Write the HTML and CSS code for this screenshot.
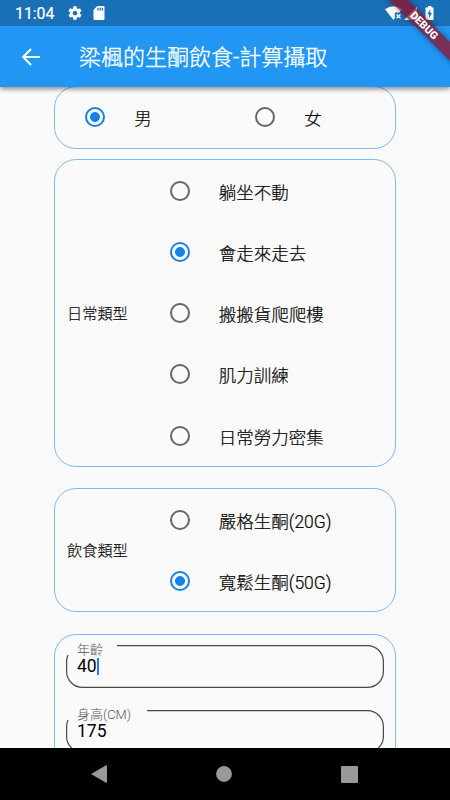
FILE: index.html
```html
<!DOCTYPE html>
<html lang="zh-Hant">
<head>
<meta charset="utf-8">
<title>梁楓的生酮飲食-計算攝取</title>
<link rel="stylesheet" href="styles.css">
</head>
<body>
<div class="screen">
  <header class="top">
    <div class="status">
      <span class="clock">11:04</span>
      <svg class="gear" width="16" height="16" viewBox="0 0 24 24"><path fill="#fff" d="M19.43 12.98c.04-.32.07-.64.07-.98s-.03-.66-.07-.98l2.110-1.650c.19-.15.24-.42.12-.64l-2-3.460c-.12-.22-.39-.3-.61-.22l-2.490 1c-.52-.4-1.080-.73-1.690-.98l-.38-2.650C14.460 2.180 14.250 2 14 2h-4c-.25 0-.46.18-.49.42l-.38 2.650c-.61.25-1.170.59-1.690.98l-2.490-1c-.23-.09-.49 0-.61.22l-2 3.460c-.13.22-.07.49.12.64l2.110 1.650c-.04.32-.07.65-.07.98s.03.66.07.98l-2.110 1.650c-.19.15-.24.42-.12.64l2 3.460c.12.22.39.3.61.22l2.490-1c.52.4 1.080.73 1.690.98l.38 2.650c.03.24.24.42.49.42h4c.25 0 .46-.18.49-.42l.38-2.650c.61-.25 1.170-.59 1.690-.98l2.490 1c.23.09.49 0 .61-.22l2-3.460c.12-.22.07-.49-.12-.64l-2.110-1.650zM12 15.500c-1.930 0-3.500-1.570-3.500-3.500s1.570-3.500 3.500-3.500 3.500 1.570 3.500 3.500-1.570 3.500-3.500 3.500z"/></svg>
      <svg class="sd" width="12" height="14" viewBox="0 0 12 14"><path fill="#fff" fill-rule="evenodd" d="M4.200 0H10.500Q11.500 0 11.500 1V13Q11.500 14 10.500 14H1.500Q.5 14 .5 13V4ZM4.300 1.700V4.500H5.600V1.700ZM6.500 1.700V4.500H7.800V1.700ZM8.700 1.700V4.500H10V1.700Z"/></svg>
      <svg class="signals" width="52" height="16" viewBox="0 0 52 16">
        <path fill="#fff" d="M0 3.300Q8.500-2.600 17 3.300L14.500 6.500H9.800V12L8.500 14Z"/>
        <path stroke="#fff" stroke-width="1.400" d="M11.500 8.300L15.500 12.300M15.500 8.300L11.500 12.300"/>
        <path fill="#fff" d="M19 14L32 1V14Z"/>
        <path fill="#fff" fill-rule="evenodd" d="M43 0H46.500V1.500H48.500V14H40.500V1.500H43ZM45.300 3.300L42.400 8.300H44V12L47 7H45.300Z"/>
      </svg>
    </div>
    <div class="appbar">
      <svg class="back" width="18" height="18" viewBox="0 0 18 18"><path d="M17.800 9H1.500M9 1L1.200 9L9 17" fill="none" stroke="#fff" stroke-width="2"/></svg>
      <h1>梁楓的生酮飲食-計算攝取</h1>
    </div>
  </header>
  <div class="ribbon"><span>DEBUG</span></div>

  <main class="content">
    <section class="card gender">
      <div class="option"><i class="radio on"></i><span>男</span></div>
      <div class="option"><i class="radio"></i><span>女</span></div>
    </section>

    <section class="card activity">
      <div class="caption">日常類型</div>
      <div class="list">
        <div class="option"><i class="radio"></i><span>躺坐不動</span></div>
        <div class="option"><i class="radio on"></i><span>會走來走去</span></div>
        <div class="option"><i class="radio"></i><span>搬搬貨爬爬樓</span></div>
        <div class="option"><i class="radio"></i><span>肌力訓練</span></div>
        <div class="option"><i class="radio"></i><span>日常勞力密集</span></div>
      </div>
    </section>

    <section class="card diet">
      <div class="caption">飲食類型</div>
      <div class="list">
        <div class="option"><i class="radio"></i><span>嚴格生酮(20G)</span></div>
        <div class="option"><i class="radio on"></i><span>寬鬆生酮(50G)</span></div>
      </div>
    </section>

    <section class="card form">
      <div class="field">
        <svg class="outline" width="318" height="43" viewBox="0 0 318 43"><path d="M51 .6H301.500A16 16 0 0 1 317.400 16.500V26.500A16 16 0 0 1 301.500 42.400H16.500A16 16 0 0 1 .6 26.500V16.500Q.6 13 2 10"/></svg>
        <div class="label">年齡</div>
        <div class="value">40<i class="caret"></i></div>
      </div>
      <div class="field">
        <svg class="outline" width="318" height="43" viewBox="0 0 318 43"><path d="M81 .6H301.500A16 16 0 0 1 317.400 16.500V26.500A16 16 0 0 1 301.500 42.400H16.500A16 16 0 0 1 .6 26.500V16.500Q.6 13 2 10"/></svg>
        <div class="label">身高(CM)</div>
        <div class="value">175</div>
      </div>
    </section>
  </main>

  <nav class="navbar">
    <svg width="16" height="18" viewBox="0 0 16 18"><path fill="#999" d="M0 9L15 .3Q16 0 16 1V17Q16 18 15 17.700Z"/></svg>
    <svg width="16" height="16" viewBox="0 0 16 16"><circle cx="8" cy="8" r="7.900" fill="#999"/></svg>
    <svg width="17" height="17" viewBox="0 0 17 17"><rect width="17" height="17" rx="1" fill="#999"/></svg>
  </nav>
</div>
</body>
</html>
```
FILE: styles.css
```css
* { box-sizing: border-box; }
body {
  margin: 0;
  font-family: Roboto, "Noto Sans CJK TC", sans-serif;
  color: #000;
}
.screen {
  position: relative;
  width: 450px;
  height: 800px;
  overflow: hidden;
  display: flex;
  flex-direction: column;
  background: #fafafa;
}
.top {
  position: relative;
  z-index: 1;
  flex: none;
  height: 87px;
  background: #2196f3;
  box-shadow: 0 2px 5px rgba(0, 0, 0, .45);
}
.status {
  height: 26px;
  padding: 0 13px 0 15px;
  display: flex;
  align-items: center;
  background: #1a70b7;
  color: #fff;
}
.clock { width: 52px; font-size: 15.800px; line-height: 26px; font-weight: 400; padding-top: 2px; -webkit-text-stroke: .2px; }
.sd { margin-left: 10px; }
.signals { margin-left: auto; margin-top: 2px; }
.appbar {
  height: 61px;
  display: flex;
  align-items: center;
  padding-left: 22px;
}
h1 {
  margin: 0 0 0 39px;
  padding-top: 2px;
  color: #fff;
  font-size: 22px;
  line-height: 32px;
  font-weight: 300;
  -webkit-text-stroke: .35px;
  white-space: nowrap;
}
.ribbon {
  position: absolute;
  z-index: 2;
  top: 0;
  right: 0;
  width: 70px;
  height: 70px;
  overflow: hidden;
}
.ribbon span {
  position: absolute;
  left: -19px;
  top: 19px;
  width: 126px;
  height: 13px;
  transform: rotate(45deg);
  background: rgba(150, 12, 36, .74);
  box-shadow: 0 0 6px rgba(0, 0, 0, .4);
  color: #fff;
  font-size: 10.700px;
  line-height: 13px;
  font-weight: 900;
  text-align: center;
}
.content {
  flex: 1;
  min-height: 0;
  overflow: hidden;
  padding: 0 54px;
}
.card {
  width: 342px;
  border: 1px solid #7fb9f6;
  border-radius: 22px;
  display: flex;
}
.gender { height: 63px; margin-top: -1px; }
.gender .option { width: 170px; padding-left: 30px; height: 60px; }
.activity { height: 308px; margin-top: 10px; }
.diet { height: 124px; margin-top: 21px; }
.form { height: 200px; margin-top: 22px; flex-direction: column; padding: 10px 11px 0; }
.caption {
  width: 85px;
  padding: 1px 0 0 12px;
  align-self: center;
  font-size: 15.200px;
  line-height: 22px;
  font-weight: 300;
  -webkit-text-stroke: .15px;
  white-space: nowrap;
}
.list { padding-left: 29.500px; }
.option {
  height: 61.250px;
  display: flex;
  align-items: center;
  font-size: 17.500px;
  font-weight: 300;
  -webkit-text-stroke: .2px;
  white-space: nowrap;
}
.option span { padding-top: 1px; }
.radio {
  width: 20px;
  height: 20px;
  margin-right: 29.300px;
  border: 2px solid #666;
  border-radius: 50%;
}
.radio.on {
  border-color: #1582e8;
  background: radial-gradient(circle, #1582e8 4.500px, transparent 5.300px);
}
.field {
  position: relative;
  flex: none;
  height: 43px;
  margin-bottom: 22px;
  padding-left: 11px;
}
.outline {
  position: absolute;
  top: 0;
  left: 0;
  fill: none;
  stroke: #484848;
  stroke-width: 1.200;
}
.label { font-size: 13px; line-height: 14px; margin-top: -2px; color: #555; font-weight: 300; }
.value { display: flex; align-items: center; font-size: 17.500px; line-height: 20px; margin-top: -1px; }
.caret { width: 2px; height: 17px; background: #2979ff; }
.navbar {
  flex: none;
  height: 52px;
  padding: 0 92px 0 91px;
  display: flex;
  align-items: center;
  justify-content: space-between;
  background: #000;
}
```
